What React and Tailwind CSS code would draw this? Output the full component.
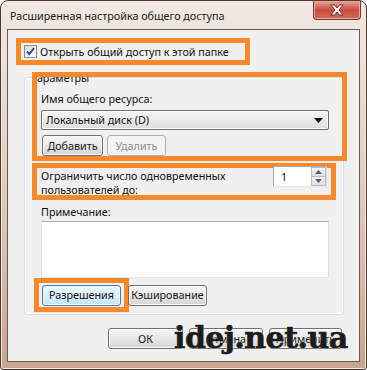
import React from "react"

const btn =
  "flex items-center justify-center h-[21px] rounded-[3px] border border-[#707070] bg-gradient-to-b from-[#f6f6f6] via-[#e8e8e8] to-[#d4d4d4] shadow-[inset_0_0_0_1px_#fbfbfb] text-[#1a1a1a]"

const orange = "border-[5px] border-[#f7892b]"

const CloseButton = () => (
  <div className="w-[48px] h-[19px] mr-[5px] rounded-b-[4px] border border-t-0 border-[#6e3a33] bg-gradient-to-b from-[#e7a597] via-[#c84a3e] to-[#d26b58] shadow-[inset_0_0_0_1px_#eba89a] flex items-center justify-center">
    <svg width="14" height="12" viewBox="0 0 14 12">
      <path
        d="M1 1 H4.5 L7 4 L9.5 1 H13 L9 6 L13 11 H9.5 L7 8 L4.5 11 H1 L5 6 Z"
        fill="#ffffff"
        stroke="#5b2b25"
        strokeWidth="0.9"
        strokeLinejoin="round"
      />
    </svg>
  </div>
)

const Checkbox = () => (
  <div className="w-[13px] h-[13px] border border-[#8e8f8f] bg-gradient-to-br from-[#dcdcdc] to-[#fefefe] flex items-center justify-center">
    <svg width="11" height="11" viewBox="0 0 11 11">
      <path d="M2 5.5 L4.3 8 L9 2.2" fill="none" stroke="#2a4a9a" strokeWidth="1.9" />
    </svg>
  </div>
)

const Spinner = () => (
  <div className="w-[54px] h-[21px] -mt-[2px] border border-[#abadb3] border-b-[#e3e9ef] border-r-[#dbdfe6] bg-white flex">
    <div className="flex-1 pl-[7px] flex items-center text-[#111]">1</div>
    <div className="w-[15px] flex flex-col">
      <div className="flex-1 border border-[#b8bcc2] bg-gradient-to-b from-[#f3f3f3] to-[#dedede] flex items-center justify-center">
        <svg width="7" height="4" viewBox="0 0 7 4"><path d="M0 4 L3.5 0 L7 4 Z" fill="#4d6185" /></svg>
      </div>
      <div className="flex-1 border border-t-0 border-[#b8bcc2] bg-gradient-to-b from-[#f3f3f3] to-[#dedede] flex items-center justify-center">
        <svg width="7" height="4" viewBox="0 0 7 4"><path d="M0 0 L3.5 4 L7 0 Z" fill="#4d6185" /></svg>
      </div>
    </div>
  </div>
)

export default function App() {
  return (
    <div className="relative w-[367px] h-[370px] rounded-t-[8px] rounded-b-[3px] border border-[#4a3a32] bg-gradient-to-b from-[#f1e9e3] via-[#e1cdc0] to-[#c8a591] shadow-[inset_0_0_0_1px_#f4e8df] flex flex-col font-['Noto_Sans',sans-serif] text-[10.75px] leading-[16px] text-[#111]">
      <div className="h-[28px] flex items-start justify-between">
        <div className="pl-[9px] pt-[7px] text-[#1b1b1b]">Расширенная настройка общего доступа</div>
        <CloseButton />
      </div>

      <div className="mx-[6px] h-[333px] border border-[#6a5a50] bg-[#f0f0f0] flex flex-col">
        <div className={`ml-[8px] mt-[8px] w-[234px] h-[27px] ${orange} flex items-center pl-[3px] gap-[3px]`}>
          <Checkbox />
          <span>Открыть общий доступ к этой папке</span>
        </div>

        <div className="ml-[16px] mt-[12px] w-[320px] h-[238px] rounded-[3px] border border-[#d5dfe5] shadow-[inset_0_0_0_1px_#ffffff] flex flex-col">
          <div className={`ml-[7px] -mt-[6px] w-[315px] h-[89px] ${orange} overflow-hidden pl-[4px] flex flex-col`}>
            <div className="-ml-[12px] -mt-[7px] h-[16px]">Параметры</div>
            <div className="mt-[5px]">Имя общего ресурса:</div>
            <div className="mt-[3px] w-[288px] h-[21px] rounded-[2px] border border-[#707070] bg-gradient-to-b from-[#f4f4f4] via-[#ebebeb] to-[#dcdcdc] shadow-[inset_0_0_0_1px_#fafafa] flex items-center justify-between pl-[4px] pr-[5px]">
              <span>Локальный диск (D)</span>
              <svg width="9" height="5" viewBox="0 0 9 5"><path d="M0 0 H9 L4.5 5 Z" fill="#111" /></svg>
            </div>
            <div className="mt-[5px] flex gap-[4px] pl-[1px]">
              <div className={`${btn} w-[61px]`}>Добавить</div>
              <div className="flex items-center justify-center h-[21px] w-[59px] rounded-[3px] border border-[#adb2b5] bg-[#f4f4f4] text-[#8d8d8d]">Удалить</div>
            </div>
          </div>

          <div className={`ml-[7px] mt-[2px] w-[304px] h-[37px] ${orange} flex justify-between pl-[4px] pr-[4px]`}>
            <div className="leading-[14px] pt-[1px]">
              Ограничить число одновременных
              <br />
              пользователей до:
            </div>
            <Spinner />
          </div>

          <div className="ml-[16px] mt-[4px]">Примечание:</div>
          <div className="ml-[16px] mt-[1px] w-[288px] h-[57px] bg-white border border-[#abadb3] border-l-[#e2e3ea] border-r-[#dbdfe6] border-b-[#e3e9ef]" />

          <div className="ml-[9px] flex items-center">
            <div className={`w-[95px] h-[34px] ${orange} flex items-center pl-[3px]`}>
              <div className="flex items-center justify-center h-[21px] w-[79px] rounded-[3px] border border-[#3c7fb1] bg-gradient-to-b from-[#edf7fd] via-[#dcf0fc] to-[#c2e5f9] shadow-[inset_0_0_0_1px_#f4fbfe]">Разрешения</div>
            </div>
            <div className={`${btn} w-[79px] -ml-[1px]`}>Кэширование</div>
          </div>
        </div>

        <div className="mt-[13px] ml-[100px] flex gap-[6px]">
          <div className={`${btn} w-[75px]`}>ОК</div>
          <div className={`${btn} w-[74px]`}>Отмена</div>
          <div className={`${btn} w-[73px]`}>Применить</div>
        </div>
      </div>

      <div className="absolute left-[173px] top-[319px] font-['DejaVu_Serif',serif] font-bold text-[30px] leading-[36px] tracking-[-0.5px] text-[#1c1c1c] [-webkit-text-stroke:0.7px_#1c1c1c] [text-shadow:0_0_2px_#ffffff,0_0_1px_#ffffff]">
        idej.net.ua
      </div>
    </div>
  )
}
